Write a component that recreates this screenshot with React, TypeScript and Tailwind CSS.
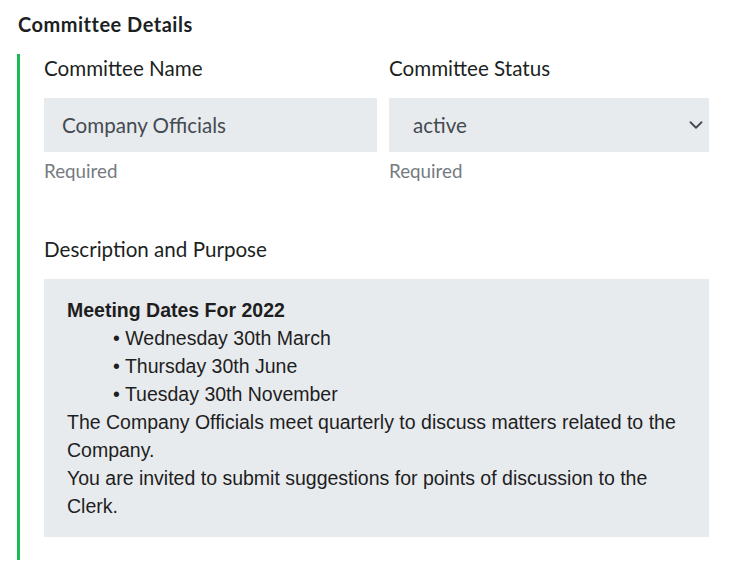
import { ChevronDown } from 'lucide-react'

const labelFont = { fontFamily: 'Lato, "Open Sans", sans-serif' }

export default function App() {
  return (
    <div className="min-h-[587px] bg-white text-[#1c1f23]" style={labelFont}>
      <div className="pl-[18px] pt-[11px]">
        <h2 className="text-[20px] leading-[26px] font-bold tracking-[0.5px]">Committee Details</h2>
      </div>

      {/* Section body with green rule */}
      <div className="ml-[17px] mt-[17px] w-[692px] border-l-[3px] border-[#1db954] pl-[24px] pb-[23px]">
        <div className="grid grid-cols-[333px_320px] gap-x-3">
          <div>
            <label className="block text-[20.6px] leading-[28px]">Committee Name</label>
            <div className="mt-[16px] h-[54px] bg-[#e8ebee] px-[18px] flex items-center text-[20.6px] text-[#444a52]">
              Company Officials
            </div>
            <p className="mt-[6px] text-[18.8px] leading-[26px] text-[#767b82]">Required</p>
          </div>
          <div>
            <label className="block text-[20.6px] leading-[28px]">Committee Status</label>
            <div className="mt-[16px] h-[54px] bg-[#e8ebee] pl-[24px] pr-[2px] flex items-center justify-between text-[20.6px] text-[#444a52]">
              <span>active</span>
              <ChevronDown className="w-[22px] h-[22px] text-[#444a52]" strokeWidth={2} />
            </div>
            <p className="mt-[6px] text-[18.8px] leading-[26px] text-[#767b82]">Required</p>
          </div>
        </div>

        <label className="block mt-[51px] text-[20.6px] leading-[28px]">Description and Purpose</label>
        <div
          className="mt-[16px] bg-[#e8ebee] px-[23px] pt-[17px] pb-[17px] text-[19.5px] leading-[28px] text-[#1e1e1e]"
          style={{ fontFamily: '"Liberation Sans", Arial, sans-serif' }}
        >
          <p className="font-bold">Meeting Dates For 2022</p>
          <ul className="pl-[46px]">
            <li>• Wednesday 30th March</li>
            <li>• Thursday 30th June</li>
            <li>• Tuesday 30th November</li>
          </ul>
          <p>The Company Officials meet quarterly to discuss matters related to the Company.</p>
          <p>You are invited to submit suggestions for points of discussion to the Clerk.</p>
        </div>
      </div>
    </div>
  )
}
